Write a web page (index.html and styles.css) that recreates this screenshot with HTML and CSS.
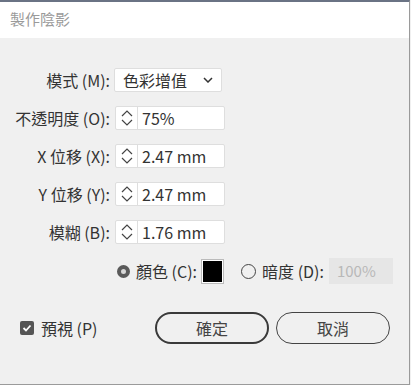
FILE: index.html
```html
<!DOCTYPE html>
<html>
<head>
    <meta charset="utf-8">
    <title>製作陰影</title>
    <link rel="stylesheet" href="styles.css">
</head>
<body>
    <div id="dialog">
        <div id="title-bar">製作陰影</div>
        <div id="content">
            <div class="form-grid">
                <label>模式 (M):</label>
                <div class="select-box">
                    <span>色彩增值</span>
                    <svg width="10" height="6" viewBox="0 0 10 6"><path d="M1 1 L5 5 L9 1" fill="none" stroke="#333" stroke-width="1.5"/></svg>
                </div>

                <label>不透明度 (O):</label>
                <div class="spin-input">
                    <span class="spin-arrows">
                        <svg width="14" height="20" viewBox="0 0 14 20"><path d="M2 8 L7 3 L12 8 M2 12 L7 17 L12 12" fill="none" stroke="#444" stroke-width="1.2"/></svg>
                    </span>
                    <span class="spin-value">75%</span>
                </div>

                <label>X 位移 (X):</label>
                <div class="spin-input">
                    <span class="spin-arrows">
                        <svg width="14" height="20" viewBox="0 0 14 20"><path d="M2 8 L7 3 L12 8 M2 12 L7 17 L12 12" fill="none" stroke="#444" stroke-width="1.2"/></svg>
                    </span>
                    <span class="spin-value">2.47 mm</span>
                </div>

                <label>Y 位移 (Y):</label>
                <div class="spin-input">
                    <span class="spin-arrows">
                        <svg width="14" height="20" viewBox="0 0 14 20"><path d="M2 8 L7 3 L12 8 M2 12 L7 17 L12 12" fill="none" stroke="#444" stroke-width="1.2"/></svg>
                    </span>
                    <span class="spin-value">2.47 mm</span>
                </div>

                <label>模糊 (B):</label>
                <div class="spin-input">
                    <span class="spin-arrows">
                        <svg width="14" height="20" viewBox="0 0 14 20"><path d="M2 8 L7 3 L12 8 M2 12 L7 17 L12 12" fill="none" stroke="#444" stroke-width="1.2"/></svg>
                    </span>
                    <span class="spin-value">1.76 mm</span>
                </div>

                <span></span>
                <div class="color-row">
                    <span class="radio checked"></span>
                    <span class="radio-label">顏色 (C):</span>
                    <span class="swatch"></span>
                    <span class="radio"></span>
                    <span class="radio-label">暗度 (D):</span>
                    <span class="disabled-input">100%</span>
                </div>
            </div>

            <div class="footer">
                <div class="preview">
                    <span class="checkbox">
                        <svg width="10" height="10" viewBox="0 0 10 10"><path d="M1.5 5 L4 7.5 L8.5 2.5" fill="none" stroke="#fff" stroke-width="1.8"/></svg>
                    </span>
                    <span>預視 (P)</span>
                </div>
                <button class="btn primary">確定</button>
                <button class="btn">取消</button>
            </div>
        </div>
    </div>
</body>
</html>
```

FILE: styles.css
```css
html, body {
    margin: 0;
    padding: 0;
}
body {
    font-family: "Noto Sans CJK TC", "Noto Sans", sans-serif;
    font-size: 16px;
    color: #333;
    background: #f0f0f0;
}
#dialog {
    width: 409px;
    height: 382px;
    border-top: 2px solid #6a7384;
    border-right: 1px solid #9a9a9a;
    border-bottom: 1px solid #9a9a9a;
    background: #f0f0f0;
}
#title-bar {
    height: 36px;
    background: #fff;
    color: #9a9a9a;
    font-size: 15px;
    padding-left: 10px;
    line-height: 34px;
}
#content {
    padding-top: 30px;
}

.form-grid {
    display: grid;
    grid-template-columns: 110px auto;
    column-gap: 4px;
    row-gap: 14px;
    align-items: center;
}
.form-grid label {
    text-align: right;
    line-height: 24px;
    white-space: nowrap;
}

.select-box {
    width: 90px;
    height: 22px;
    background: #fff;
    border: 1px solid #dedede;
    border-radius: 2px;
    display: flex;
    align-items: center;
    justify-content: space-between;
    padding: 0 8px;
}

.spin-input {
    width: 108px;
    height: 22px;
    margin-left: 1px;
    display: flex;
    background: #fff;
    border: 1px solid #dedede;
    border-radius: 2px;
}
.spin-arrows {
    width: 21px;
    border-right: 1px solid #dedede;
    display: flex;
    align-items: center;
    justify-content: center;
}
.spin-value {
    padding-left: 4px;
    line-height: 22px;
}

.color-row {
    display: flex;
    align-items: center;
    margin-left: 3px;
    height: 26px;
}
.radio {
    width: 15px;
    height: 15px;
    border: 1.5px solid #444;
    border-radius: 50%;
    box-sizing: border-box;
    margin-top: 1px;
}
.radio.checked {
    width: 13px;
    height: 13px;
    border: 4px solid #5a5a5a;
    background: #d8d8d8;
}
.radio-label {
    margin-left: 6px;
    margin-right: 5px;
}
.swatch {
    width: 19px;
    height: 21px;
    background: #000;
    border: 1px solid #fff;
    outline: 1px solid #bbb;
    margin-right: 18px;
}
.disabled-input {
    width: 56px;
    height: 26px;
    line-height: 26px;
    padding-left: 8px;
    background: #e6e6e6;
    color: #b8b8b8;
    font-size: 15px;
}

.footer {
    display: flex;
    align-items: center;
    margin-top: 28px;
    padding-left: 20px;
}
.preview {
    display: flex;
    align-items: center;
    gap: 7px;
    width: 135px;
}
.checkbox {
    width: 14px;
    height: 14px;
    background: #555;
    border-radius: 2px;
    display: flex;
    align-items: center;
    justify-content: center;
}
.btn {
    width: 114px;
    height: 32px;
    border: 1px solid #444;
    border-radius: 16px;
    background: #f0f0f0;
    font-family: inherit;
    font-size: 16px;
    color: #444;
    margin-right: 7px;
    padding: 0;
}
.btn.primary {
    border: 2px solid #3a3a3a;
}
```
